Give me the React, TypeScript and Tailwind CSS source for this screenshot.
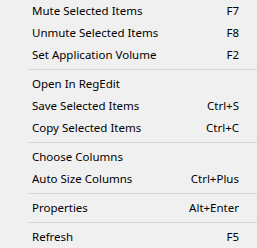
import React from 'react';

type Entry = { label: string; shortcut?: string } | 'sep';

const entries: Entry[] = [
  { label: 'Mute Selected Items', shortcut: 'F7' },
  { label: 'Unmute Selected Items', shortcut: 'F8' },
  { label: 'Set Application Volume', shortcut: 'F2' },
  'sep',
  { label: 'Open In RegEdit' },
  { label: 'Save Selected Items', shortcut: 'Ctrl+S' },
  { label: 'Copy Selected Items', shortcut: 'Ctrl+C' },
  'sep',
  { label: 'Choose Columns' },
  { label: 'Auto Size Columns', shortcut: 'Ctrl+Plus' },
  'sep',
  { label: 'Properties', shortcut: 'Alt+Enter' },
  'sep',
  { label: 'Refresh', shortcut: 'F5' },
];

export default function App() {
  return (
    <div className="w-[257px] h-[248px] overflow-hidden bg-[#f0f0f0] text-black font-['Noto_Sans',sans-serif] text-[11.5px]">
      {entries.map((e, i) =>
        e === 'sep' ? (
          <div key={i} className="h-[7px] pl-[28px] pt-[3px]">
            <div className="h-px bg-[#d7d7d7]" />
          </div>
        ) : (
          <div key={i} className="flex h-[22px] items-center justify-between pl-[32px] pr-[18px] leading-none">
            <span>{e.label}</span>
            {e.shortcut && <span>{e.shortcut}</span>}
          </div>
        )
      )}
    </div>
  );
}
